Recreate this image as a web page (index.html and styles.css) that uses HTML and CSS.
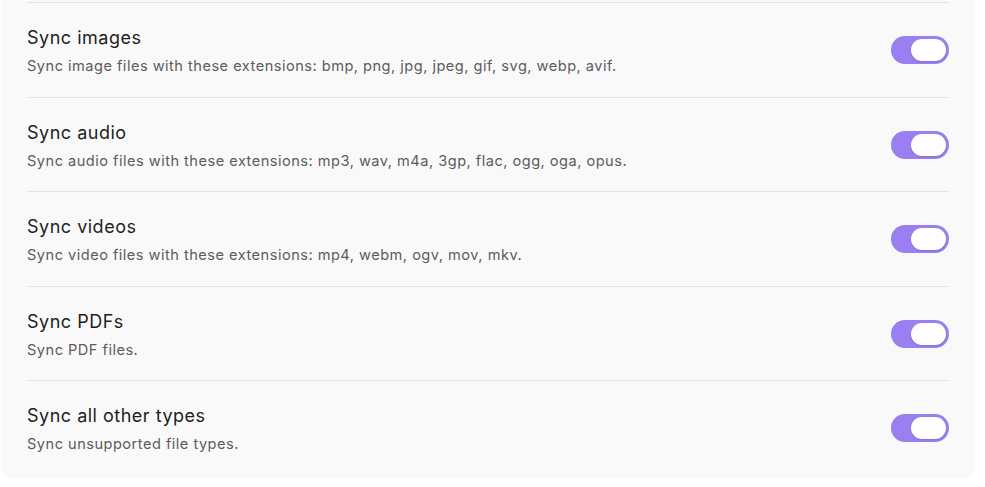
FILE: index.html
```html
<!DOCTYPE html>
<html lang="en">
<head>
  <meta charset="utf-8">
  <title>Sync settings</title>
  <link rel="stylesheet" href="styles.css">
</head>
<body>
  <div class="settings-panel">
    <div class="setting-item">
      <div class="setting-info">
        <div class="setting-name">Sync images</div>
        <div class="setting-desc">Sync image files with these extensions: bmp, png, jpg, jpeg, gif, svg, webp, avif.</div>
      </div>
      <div class="toggle is-on"><span class="knob"></span></div>
    </div>
    <div class="setting-item">
      <div class="setting-info">
        <div class="setting-name">Sync audio</div>
        <div class="setting-desc">Sync audio files with these extensions: mp3, wav, m4a, 3gp, flac, ogg, oga, opus.</div>
      </div>
      <div class="toggle is-on"><span class="knob"></span></div>
    </div>
    <div class="setting-item">
      <div class="setting-info">
        <div class="setting-name">Sync videos</div>
        <div class="setting-desc">Sync video files with these extensions: mp4, webm, ogv, mov, mkv.</div>
      </div>
      <div class="toggle is-on"><span class="knob"></span></div>
    </div>
    <div class="setting-item">
      <div class="setting-info">
        <div class="setting-name">Sync PDFs</div>
        <div class="setting-desc">Sync PDF files.</div>
      </div>
      <div class="toggle is-on"><span class="knob"></span></div>
    </div>
    <div class="setting-item">
      <div class="setting-info">
        <div class="setting-name">Sync all other types</div>
        <div class="setting-desc">Sync unsupported file types.</div>
      </div>
      <div class="toggle is-on"><span class="knob"></span></div>
    </div>
  </div>
</body>
</html>
```

FILE: styles.css
```css
html, body {
  margin: 0; padding: 0;
  background: #fff;
  font-family: Inter, 'Noto Sans', Arial, sans-serif;
  color: #1e1e1e;
}
.settings-panel {
  width: 974px;
  margin-left: 1px;
  box-sizing: border-box;
  background: #f9f9f9;
  border-radius: 0 0 13px 13px;
  padding: 2px 26px 3px;
}
.setting-item {
  display: flex; align-items: center; justify-content: space-between;
  border-top: 1px solid #e2e2e2;
  padding: 23px 0 20.5px;
}
.setting-info {
  display: flex; flex-direction: column;
}
.setting-name {
  font-size: 18px;
  line-height: 24px;
  letter-spacing: 0.5px;
  color: #1e1e1e;
}
.setting-desc {
  font-size: 14.6px;
  line-height: 20px;
  letter-spacing: 0.48px;
  margin-top: 6px;
  color: #5c5c5c;
}
.toggle {
  width: 58px; height: 28px;
  border-radius: 14px;
  background: #9a7ff0;
  box-sizing: border-box;
  padding: 3px;
  display: flex; justify-content: flex-end;
  flex-shrink: 0;
  margin-top: -2px;
}
.toggle .knob {
  width: 35px; height: 22px;
  border-radius: 11px;
  background: #fff;
  box-shadow: 0 1px 2px #0002;
}
```
